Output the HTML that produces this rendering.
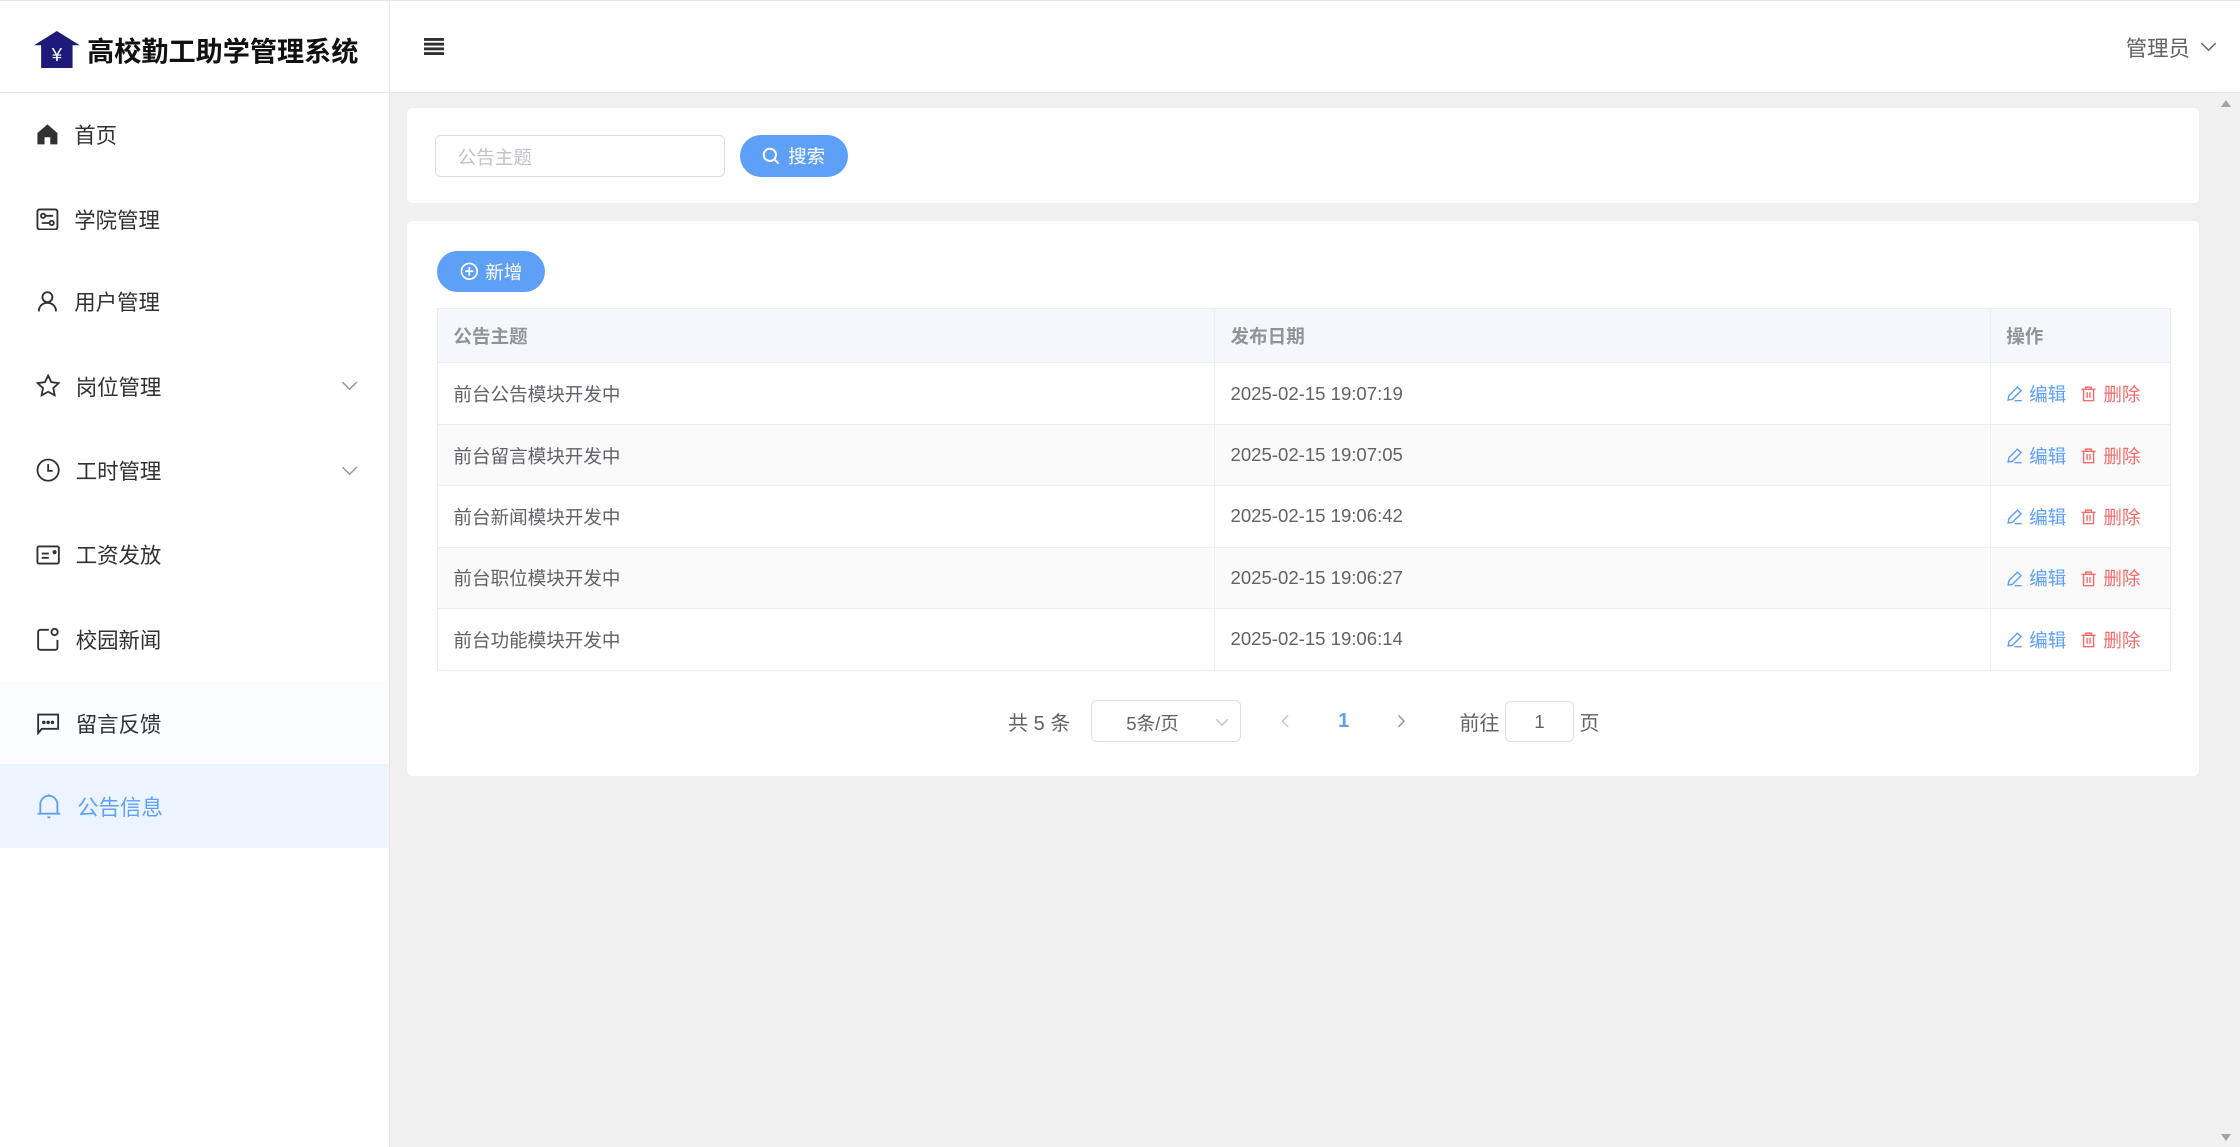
<!DOCTYPE html>
<html><head><meta charset="utf-8"><style>
*{box-sizing:border-box;margin:0;padding:0}
html,body{width:2240px;height:1147px;overflow:hidden;background:#fff}
#r{zoom:1.4285714;width:1568px;height:803px;position:relative;font-family:"Liberation Sans","Noto Sans CJK SC",sans-serif;color:#303133;font-size:14px}
.abs{position:absolute}
.side{left:0;top:0;width:273px;height:803px;border-right:1px solid #e6e6e6;background:#fff}
.logo{top:0;left:0;width:272px;height:65px;border-bottom:1px solid #e6e6e6;border-top:1px solid #e6e6e6}
.mi{left:0;width:272px;height:58.7px;display:flex;align-items:center;padding-left:25px;font-size:15px;color:#303133}
.mi svg{margin-right:11px}
.main{left:273px;top:0;right:0;height:803px;background:#f0f0f0}
.hdr{left:0;top:0;right:0;height:65px;background:#fff;border-bottom:1px solid #e6e6e6;border-top:1px solid #e6e6e6}
.card{background:#fff;border-radius:4px;border:1px solid #ebeef5}
.btn{background:#5e9ff8;color:#fff;border-radius:15px;display:flex;align-items:center;justify-content:center;font-size:13px}
table{border-collapse:collapse;width:1214px;font-size:13px;color:#606266}
td,th{border:1px solid #ebeef5;height:43px;padding-left:11px;text-align:left}
th{height:38px;background:#f5f7fa;color:#909399;font-weight:bold}
tr:nth-child(odd) td{background:#fafafa}
.ed{color:#5e9ff8}.de{color:#f56c6c;margin-left:10px}
.ed svg,.de svg{vertical-align:-1px;margin-right:4px}
</style></head><body><div id="r">
<div class="abs side">
 <div class="abs logo">
  <svg class="abs" style="left:24px;top:21px" width="32" height="26" viewBox="0 0 32 26"><path d="M16 0 L32 10 L27 10 L27 26 L5 26 L5 10 L0 10 Z" fill="#1e1a7a"/><text x="16" y="21" font-size="13" fill="#fff" text-anchor="middle" font-family="Liberation Sans">¥</text></svg>
  <div class="abs" style="left:61px;top:20px;font-size:19px;font-weight:bold;color:#111">高校勤工助学管理系统</div>
 </div>
 <div class="abs mi" style="top:65px"><svg width="16" height="16" viewBox="0 0 16 16"><path d="M8 1 L15 7 V15 H10 V10 H6 V15 H1 V7Z" fill="#303133"/></svg>首页</div>
 <div class="abs mi" style="top:124px"><svg width="16" height="16" viewBox="0 0 16 16" fill="none" stroke="#303133" stroke-width="1.3"><rect x="1" y="1" width="14" height="14" rx="1.5"/><circle cx="5" cy="5.5" r="1.5"/><circle cx="11" cy="10.5" r="1.5"/><path d="M7 5.5h5M4 10.5h5"/></svg>学院管理</div>
 <div class="abs mi" style="top:182px"><svg width="16" height="16" viewBox="0 0 16 16" fill="none" stroke="#303133" stroke-width="1.3"><circle cx="8" cy="5" r="3.5"/><path d="M2 15c0-4 3-6 6-6s6 2 6 6"/></svg>用户管理</div>
 <div class="abs mi" style="top:241px"><svg width="17" height="17" viewBox="0 0 16 16" fill="none" stroke="#303133" stroke-width="1.2"><path d="M8 1l2.1 4.4 4.8.6-3.5 3.3.9 4.7L8 11.7 3.7 14l.9-4.7L1.1 6l4.8-.6z"/></svg>岗位管理<svg class="abs" style="left:239px" width="12" height="8" viewBox="0 0 12 8" fill="none" stroke="#909399"><path d="M1 1.5l5 5 5-5"/></svg></div>
 <div class="abs mi" style="top:300px"><svg width="17" height="17" viewBox="0 0 16 16" fill="none" stroke="#303133" stroke-width="1.2"><circle cx="8" cy="8" r="7"/><path d="M8 4v4.5h3"/></svg>工时管理<svg class="abs" style="left:239px" width="12" height="8" viewBox="0 0 12 8" fill="none" stroke="#909399"><path d="M1 1.5l5 5 5-5"/></svg></div>
 <div class="abs mi" style="top:359px"><svg width="17" height="14" viewBox="0 0 17 14" fill="none" stroke="#303133" stroke-width="1.3"><rect x="1" y="1" width="15" height="12" rx="1"/><path d="M4 6h5M4 9h5"/><circle cx="13" cy="5" r=".8" fill="#303133"/></svg>工资发放</div>
 <div class="abs mi" style="top:418px"><svg width="17" height="17" viewBox="0 0 17 17" fill="none" stroke="#303133" stroke-width="1.3"><path d="M9 2H3a1.5 1.5 0 0 0-1.5 1.5v11A1.5 1.5 0 0 0 3 16h10.5A1.5 1.5 0 0 0 15 14.5V9"/><circle cx="13" cy="3.5" r="2.2"/></svg>校园新闻</div>
 <div class="abs mi" style="top:477px;background:#fafcff"><svg width="17" height="17" viewBox="0 0 17 17" fill="none" stroke="#303133" stroke-width="1.3"><path d="M1.5 15.5V2.5h14v10H4z"/><circle cx="5.5" cy="8" r=".6" fill="#303133"/><circle cx="8.5" cy="8" r=".6" fill="#303133"/><circle cx="11.5" cy="8" r=".6" fill="#303133"/></svg>留言反馈</div>
 <div class="abs mi" style="top:535px;background:#ecf5ff;color:#5e9ff8"><svg width="18" height="18" viewBox="0 0 18 18" fill="none" stroke="#5e9ff8" stroke-width="1.3"><path d="M3 14V8a6 6 0 0 1 12 0v6M1 14.5h16M9 2V1M8 17h2"/></svg>公告信息</div>
</div>
<div class="abs main">
 <div class="abs hdr">
  <svg class="abs" style="left:24px;top:26px" width="14" height="12" viewBox="0 0 14 12" fill="#303133"><rect y="0" width="14" height="2"/><rect y="3.3" width="14" height="2"/><rect y="6.6" width="14" height="2"/><rect y="9.9" width="14" height="2"/></svg>
  <div class="abs" style="left:1215px;top:22px;font-size:15px;color:#606266">管理员</div>
  <svg class="abs" style="left:1267px;top:28px" width="12" height="8" viewBox="0 0 12 8" fill="none" stroke="#606266"><path d="M1 1.5l5 5 5-5"/></svg>
 </div>
 <div class="abs" style="left:1278px;top:65px;width:17px;height:738px;background:#f1f1f1"></div>
 <div class="abs" style="left:1282px;top:70px;width:0;height:0;border:4px solid transparent;border-bottom:5px solid #a3a3a3;border-top:0"></div>
 <div class="abs" style="left:1282px;top:794px;width:0;height:0;border:4px solid transparent;border-top:5px solid #a3a3a3;border-bottom:0"></div>
 <div class="abs card" style="left:11px;top:75px;width:1256px;height:68px">
  <div class="abs" style="left:20px;top:19px;width:203px;height:29px;border:1px solid #dcdfe6;border-radius:4px;font-size:13px;color:#c0c4cc;padding:5px 15px">公告主题</div>
  <div class="abs btn" style="left:233px;top:19px;width:76px;height:29px"><svg width="13" height="13" viewBox="0 0 13 13" fill="none" stroke="#fff" stroke-width="1.4" style="margin-right:5px"><circle cx="5.5" cy="5.5" r="4.3"/><path d="M8.7 8.7l3 3"/></svg>搜索</div>
 </div>
 <div class="abs card" style="left:11px;top:154px;width:1256px;height:390px">
  <div class="abs btn" style="left:21px;top:21px;width:76px;height:29px"><svg width="13" height="13" viewBox="0 0 13 13" fill="none" stroke="#fff" stroke-width="1.2" style="margin-right:5px"><circle cx="6.5" cy="6.5" r="5.5"/><path d="M6.5 3.5v6M3.5 6.5h6"/></svg>新增</div>
  <table class="abs" style="left:21px;top:61px">
   <tr><th style="width:544px">公告主题</th><th style="width:543px">发布日期</th><th>操作</th></tr>
   <tr><td>前台公告模块开发中</td><td>2025-02-15 19:07:19</td><td><span class="ed"><svg width="12" height="12" viewBox="0 0 12 12" fill="none" stroke="#5e9ff8" stroke-width="1"><path d="M1.5 10.5l.5-3 6-6 2.5 2.5-6 6zM6 11h5"/></svg>编辑</span><span class="de"><svg width="12" height="12" viewBox="0 0 12 12" fill="none" stroke="#f56c6c" stroke-width="1"><path d="M1 3h10M4 3V1.5h4V3M2.5 3v8h7V3M5 5v4M7 5v4"/></svg>删除</span></td></tr>
   <tr><td>前台留言模块开发中</td><td>2025-02-15 19:07:05</td><td><span class="ed"><svg width="12" height="12" viewBox="0 0 12 12" fill="none" stroke="#5e9ff8" stroke-width="1"><path d="M1.5 10.5l.5-3 6-6 2.5 2.5-6 6zM6 11h5"/></svg>编辑</span><span class="de"><svg width="12" height="12" viewBox="0 0 12 12" fill="none" stroke="#f56c6c" stroke-width="1"><path d="M1 3h10M4 3V1.5h4V3M2.5 3v8h7V3M5 5v4M7 5v4"/></svg>删除</span></td></tr>
   <tr><td>前台新闻模块开发中</td><td>2025-02-15 19:06:42</td><td><span class="ed"><svg width="12" height="12" viewBox="0 0 12 12" fill="none" stroke="#5e9ff8" stroke-width="1"><path d="M1.5 10.5l.5-3 6-6 2.5 2.5-6 6zM6 11h5"/></svg>编辑</span><span class="de"><svg width="12" height="12" viewBox="0 0 12 12" fill="none" stroke="#f56c6c" stroke-width="1"><path d="M1 3h10M4 3V1.5h4V3M2.5 3v8h7V3M5 5v4M7 5v4"/></svg>删除</span></td></tr>
   <tr><td>前台职位模块开发中</td><td>2025-02-15 19:06:27</td><td><span class="ed"><svg width="12" height="12" viewBox="0 0 12 12" fill="none" stroke="#5e9ff8" stroke-width="1"><path d="M1.5 10.5l.5-3 6-6 2.5 2.5-6 6zM6 11h5"/></svg>编辑</span><span class="de"><svg width="12" height="12" viewBox="0 0 12 12" fill="none" stroke="#f56c6c" stroke-width="1"><path d="M1 3h10M4 3V1.5h4V3M2.5 3v8h7V3M5 5v4M7 5v4"/></svg>删除</span></td></tr>
   <tr><td>前台功能模块开发中</td><td>2025-02-15 19:06:14</td><td><span class="ed"><svg width="12" height="12" viewBox="0 0 12 12" fill="none" stroke="#5e9ff8" stroke-width="1"><path d="M1.5 10.5l.5-3 6-6 2.5 2.5-6 6zM6 11h5"/></svg>编辑</span><span class="de"><svg width="12" height="12" viewBox="0 0 12 12" fill="none" stroke="#f56c6c" stroke-width="1"><path d="M1 3h10M4 3V1.5h4V3M2.5 3v8h7V3M5 5v4M7 5v4"/></svg>删除</span></td></tr>
  </table>
  <div class="abs" style="left:421px;top:340px;font-size:14px;color:#606266">共 5 条</div>
  <div class="abs" style="left:479px;top:335px;width:105px;height:30px;border:1px solid #dcdfe6;border-radius:4px;font-size:13px;color:#606266;padding:6px 0 0 24px">5条/页<svg class="abs" style="left:86px;top:12px" width="10" height="6" viewBox="0 0 10 6" fill="none" stroke="#c0c4cc"><path d="M1 1l4 4 4-4"/></svg></div>
  <svg class="abs" style="left:612px;top:345px" width="6" height="10" viewBox="0 0 6 10" fill="none" stroke="#c0c4cc"><path d="M5 1L1 5l4 4"/></svg>
  <div class="abs" style="left:652px;top:342px;font-weight:bold;color:#5e9ff8;font-size:14px">1</div>
  <svg class="abs" style="left:693px;top:345px" width="6" height="10" viewBox="0 0 6 10" fill="none" stroke="#909399"><path d="M1 1l4 4-4 4"/></svg>
  <div class="abs" style="left:737px;top:340px;color:#606266">前往</div>
  <div class="abs" style="left:769px;top:336px;width:48px;height:29px;border:1px solid #dcdfe6;border-radius:4px;text-align:center;padding-top:6px;font-size:13px;color:#606266">1</div>
  <div class="abs" style="left:821px;top:340px;color:#606266">页</div>
 </div>
</div>
</div></body></html>
